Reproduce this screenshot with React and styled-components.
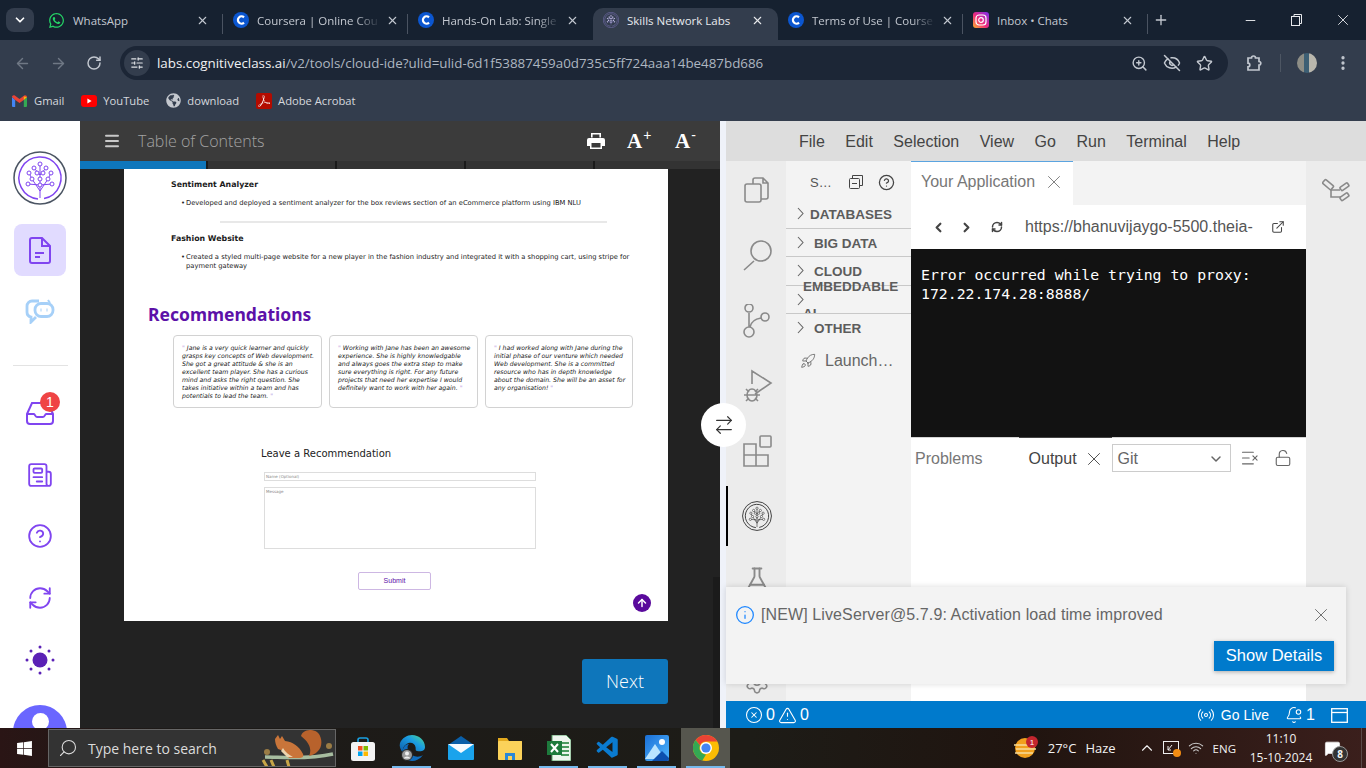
import React from "react";
import styled, { createGlobalStyle } from "styled-components";
import {
  ChevronDown, X, Plus, Minus, ArrowLeft, ArrowRight, RotateCw, ZoomIn, EyeOff, Star,
  EllipsisVertical, SlidersHorizontal, Menu, Newspaper, CircleHelp, RefreshCw,
  ArrowUp, ArrowRightLeft, ChevronRight, ChevronLeft, ExternalLink, Rocket, CircleX, TriangleAlert,
  Info, Radio, BellDot, LockOpen, ListX, Search, ChevronUp, Wifi, MessageSquare, FlaskConical,
  CircleQuestionMark, Settings,
} from "lucide-react";
import { FaWhatsapp, FaGlobeAmericas, FaWindows } from "react-icons/fa";
import { SiAdobeacrobatreader } from "react-icons/si";
import { VscVscode } from "react-icons/vsc";

const GlobalStyle = createGlobalStyle`
  html, body { margin: 0; padding: 0; background: #222; }
  * { box-sizing: border-box; }
  #root { width: 1366px; height: 768px; overflow: hidden; }
`;

const Page = styled.div`
  width: 1366px;
  height: 768px;
  display: flex;
  flex-direction: column;
  font-family: "Open Sans", "Liberation Sans", sans-serif;
  overflow: hidden;
`;

/* ---------- browser chrome ---------- */
const TabStrip = styled.div`
  height: 40px;
  background: #162130;
  display: flex;
  padding: 8px 0 0 6px;
  color: #c9ced6;
  flex: none;
`;
const TabMenu = styled.div`
  width: 28px;
  height: 24px;
  margin-right: 4px;
  border-radius: 8px;
  background: #333d4d;
  display: flex;
  align-items: center;
  justify-content: center;
  color: #fff;
`;
const Tab = styled.div`
  position: relative;
  width: 185px;
  height: 32px;
  padding: 0 14px 8px 10px;
  display: flex;
  align-items: center;
  gap: 8px;
  font-size: 11.5px;
  border-radius: 10px 10px 0 0;
  background: ${(p) => (p.$active ? "#333d4d" : "transparent")};
  color: ${(p) => (p.$active ? "#e8eaed" : "#c3c8d0")};

  & > svg {
    flex: none;
  }

  &::after {
    content: "";
    display: ${(p) => (p.$sep ? "block" : "none")};
    position: absolute;
    right: 0;
    top: 6px;
    height: 20px;
    width: 1px;
    background: #4a5361;
  }
`;
const TabTitle = styled.span`
  flex: 1;
  white-space: nowrap;
  mask-image: ${(p) => (p.$fade ? "linear-gradient(to right, #000 82%, transparent 102%)" : "none")};
`;
const NewTab = styled.div`
  width: 20px;
  height: 24px;
  margin-left: 3px;
  display: flex;
  align-items: center;
  justify-content: center;
  color: #c3c8d0;
`;
const WindowButtons = styled.div`
  margin-left: auto;
  margin-top: -8px;
  display: flex;
  color: #e8eaed;
`;
const WindowButton = styled.div`
  width: 46.3px;
  height: 40px;
  display: flex;
  align-items: center;
  justify-content: center;
`;
const Toolbar = styled.div`
  height: 44px;
  flex: none;
  background: #333d4d;
  display: flex;
  align-items: center;
  padding: 2px 0 0 4px;
  color: #c3c8d0;
`;
const NavButton = styled.div`
  width: 36px;
  display: flex;
  justify-content: center;
  color: ${(p) => (p.$dim ? "#6f7885" : "#c3c8d0")};
`;
const AddressBar = styled.div`
  width: 1108px;
  height: 34px;
  margin-left: 8px;
  padding: 0 15px 0 4px;
  border-radius: 17px;
  background: #1c2636;
  display: flex;
  align-items: center;
`;
const SiteButton = styled.div`
  width: 26px;
  height: 26px;
  border-radius: 50%;
  background: #333d4d;
  display: flex;
  align-items: center;
  justify-content: center;
  margin-right: 7px;
  color: #dfe2e6;
`;
const Url = styled.div`
  flex: 1;
  font-size: 13.37px;
  color: #aeb6c1;
  white-space: nowrap;
`;
const Host = styled.span`
  color: #f0f1f3;
`;
const AddressIcons = styled.div`
  display: flex;
  gap: 15px;
  align-items: center;
  color: #c3c8d0;
`;
const ToolbarEnd = styled.div`
  display: flex;
  align-items: center;
  margin-left: 17px;
`;
const ToolbarSep = styled.div`
  width: 1px;
  height: 18px;
  background: #4d5663;
  margin: 0 16px 0 17px;
`;
const Avatar = styled.div`
  width: 20px;
  height: 20px;
  border-radius: 50%;
  background: linear-gradient(90deg, #8e8e86 0 35%, #3d5f74 35% 60%, #b9b7ad 60%);
  margin-right: 17px;
`;
const Bookmarks = styled.div`
  height: 36px;
  flex: none;
  background: #333d4d;
  display: flex;
  align-items: center;
  padding: 0 0 3px 12px;
  gap: 17px;
  font-size: 11.2px;
  color: #d5d8dd;
`;
const Bookmark = styled.div`
  display: flex;
  align-items: center;
  gap: ${(p) => p.$gap || "6px"};
`;
const AcrobatTile = styled.span`
  width: 16px;
  height: 16px;
  background: #b30b00;
  display: flex;
  align-items: center;
  justify-content: center;
  border-radius: 2px;
`;

/* ---------- workspace ---------- */
const Workspace = styled.div`
  position: relative;
  flex: 1;
  min-height: 0;
  display: grid;
  grid-template-columns: 80px 640px 6px 640px;
  border-top: 1px solid #333d4d;
  overflow: hidden;
`;
const Rail = styled.nav`
  background: #fff;
  display: flex;
  flex-direction: column;
  align-items: center;
  padding-top: 30px;
  color: #8045f0;
  overflow: hidden;
`;
const RailLogo = styled.div`
  height: 54px;
  margin-bottom: 19px;
`;
const RailItem = styled.div`
  position: relative;
  flex: none;
  width: 52px;
  height: 52px;
  margin-bottom: ${(p) => p.$gap || "9.75px"};
  border-radius: 8px;
  background: ${(p) => (p.$active ? "#e1dbff" : "transparent")};
  display: flex;
  align-items: center;
  justify-content: center;
`;
const RailRule = styled.div`
  flex: none;
  width: 55px;
  height: 1px;
  background: #e3e3e3;
  margin: 27px 0 21px;
`;
const Badge = styled.div`
  position: absolute;
  top: 5px;
  right: 6px;
  width: 20px;
  height: 20px;
  border-radius: 50%;
  background: #ef4444;
  color: #fff;
  font: 14px/20px "Liberation Sans", sans-serif;
  text-align: center;
`;
const FlippedNews = styled(Newspaper)`
  transform: scaleX(-1);
`;
const UserBubble = styled.div`
  flex: none;
  width: 54px;
  height: 54px;
  margin-top: 19px;
  border-radius: 50%;
  background: #6a66ff;
  display: flex;
  justify-content: center;
  padding-top: 8px;
`;
const UserHead = styled.div`
  width: 17px;
  height: 17px;
  border-radius: 50%;
  background: #fff;
`;
const Lesson = styled.section`
  position: relative;
  background: #222;
  display: flex;
  flex-direction: column;
  min-height: 0;

  &::after {
    content: "";
    position: absolute;
    right: 0;
    top: 456px;
    bottom: 0;
    width: 7px;
    background: #1b1b1b;
  }
`;
const LessonHeader = styled.header`
  height: 40px;
  flex: none;
  background: #3b3b3b;
  display: flex;
  align-items: center;
  padding-left: 23px;
  color: #fff;
`;
const LessonTitle = styled.div`
  margin-left: 17px;
  font: 300 16px "Open Sans", sans-serif;
  color: #a3a3a3;
  flex: 1;
`;
const HeaderTools = styled.div`
  display: flex;
  align-items: center;
  gap: 22px;
  margin-right: 19px;
`;
const SizeButton = styled.div`
  font: bold 21px "Liberation Serif", serif;
  width: 26px;
  display: flex;
  align-items: flex-start;
`;
const SizeMark = styled.span`
  font: 400 14px "Liberation Sans", sans-serif;
  margin: -2px 0 0 1px;
`;
const Progress = styled.div`
  flex: none;
  height: 8px;
  display: grid;
  grid-template-columns: 126px 127px 127px 127px 1fr;
  gap: 2px;
  background: #1a1a1a;
`;
const ProgressPart = styled.div`
  background: ${(p) => (p.$done ? "#0e76bb" : "#333")};
`;
const LessonBody = styled.div`
  flex: 1;
  display: flex;
  flex-direction: column;
  align-items: flex-end;
  padding-right: 52px;
`;
const Doc = styled.article`
  position: relative;
  width: 544px;
  height: 452px;
  background: #fff;
  color: #222;
  font-family: "DejaVu Sans", sans-serif;
  font-size: 6.75px;
  line-height: 9px;
  padding: 11px 34px 0 47px;
`;
const ProjectName = styled.h4`
  margin: 0;
  font-size: 7.85px;
  line-height: 10px;
  font-weight: 700;
  color: #1b1b1b;
`;
const ProjectList = styled.ul`
  margin: 9px 0 0;
  padding-left: 15px;
  list-style: none;

  li::before {
    content: "•";
    display: inline-block;
    width: 5px;
    margin-left: -5px;
  }
`;
const Rule = styled.hr`
  border: none;
  height: 2px;
  background: #e8e8e8;
  margin: 13px 27px 11px 49px;
`;
const RecoHeading = styled.h2`
  margin: 31px 0 0 -23px;
  font: 700 17.5px/24px "Noto Sans", sans-serif;
  color: #5c11a8;
`;
const Cards = styled.div`
  display: grid;
  grid-template-columns: 149px 149px 148px;
  gap: 7px;
  margin: 9px 0 0 2px;
`;
const Card = styled.div`
  height: 73px;
  border: 1px solid #d2d2d2;
  border-radius: 4px;
  padding: 8px 0 0 8px;
  font-size: 6.2px;
  line-height: 8px;
  font-style: italic;
  white-space: nowrap;
  color: #222;
`;
const Quote = styled.span`
  color: #b79ae0;
`;
const FormTitle = styled.h3`
  margin: 39px 0 0 90px;
  font-size: 10px;
  line-height: 13px;
  font-weight: 400;
  color: #222;
`;
const FormFields = styled.form`
  display: flex;
  flex-direction: column;
  margin: 12px 0 0 93px;
  width: 272px;
`;
const NameField = styled.div`
  height: 9px;
  border: 1px solid #ddd;
  font-size: 4px;
  line-height: 7px;
  padding-left: 1px;
  color: #888;
`;
const MessageField = styled.div`
  height: 62px;
  margin-top: 6px;
  border: 1px solid #ddd;
  font-size: 4px;
  line-height: 7px;
  padding-left: 1px;
  color: #888;
`;
const SubmitButton = styled.div`
  width: 73px;
  height: 18px;
  margin: 23px 0 0 187px;
  border: 1px solid #cdb7e3;
  border-radius: 2px;
  text-align: center;
  font: 7px/16px "Liberation Sans", sans-serif;
  color: #5c11a8;
`;
const BackToTop = styled.div`
  position: absolute;
  right: 17px;
  bottom: 9px;
  width: 18px;
  height: 18px;
  border-radius: 50%;
  background: #5a0a9c;
  color: #fff;
  display: flex;
  align-items: center;
  justify-content: center;
`;
const NextButton = styled.div`
  width: 86px;
  height: 45px;
  margin-top: 38px;
  border-radius: 3px;
  background: #0e76bb;
  color: #fff;
  font: 300 18px/45px "Open Sans", sans-serif;
  text-align: center;
`;
const Divider = styled.div`
  background: #eff2f9;
`;
const SwapButton = styled.div`
  position: absolute;
  left: 701px;
  top: 282px;
  width: 45px;
  height: 44px;
  border-radius: 50%;
  background: #fff;
  display: flex;
  align-items: center;
  justify-content: center;
  color: #333;
  z-index: 3;
`;

/* ---------- IDE ---------- */
const Ide = styled.section`
  position: relative;
  display: flex;
  flex-direction: column;
  min-height: 0;
  font-family: "Liberation Sans", Arial, sans-serif;
`;
const MenuBar = styled.div`
  height: 40px;
  flex: none;
  background: #dddddd;
  display: flex;
  align-items: center;
  padding: 2px 0 0 73px;
  gap: 20.5px;
  font-size: 16px;
  color: #444;
`;
const IdeBody = styled.div`
  flex: 1;
  min-height: 0;
  display: grid;
  grid-template-columns: 60px 125px 395px 60px;
`;
const ActivityBar = styled.div`
  background: #ececec;
  display: flex;
  flex-direction: column;
  color: #8a8a8a;
  overflow: hidden;
`;
const ActivityItem = styled.div`
  position: relative;
  flex: none;
  height: 65px;
  display: flex;
  align-items: center;
  justify-content: center;
  padding-left: 2px;

  &:first-child {
    margin-top: -3px;
  }

  &::before {
    content: "";
    display: ${(p) => (p.$active ? "block" : "none")};
    position: absolute;
    left: 0;
    top: 3px;
    bottom: 2px;
    width: 2px;
    background: #000;
  }
`;
const ActivityEnd = styled(ActivityItem)`
  margin-top: auto;
  height: 38px;
`;
const SideBar = styled.aside`
  background: #f3f3f3;
  color: #666;
`;
const SideHead = styled.div`
  height: 39px;
  display: flex;
  align-items: center;
  padding: 3px 0 0 24px;
  font-size: 13px;
  color: #555;
`;
const SideHeadIcons = styled.div`
  display: flex;
  align-items: center;
  gap: 14px;
  margin-left: 16px;
  color: #444;
`;
const Section = styled.div`
  height: ${(p) => p.$h || "28.4px"};
  display: ${(p) => (p.$wrap ? "block" : "flex")};
  align-items: flex-start;
  padding: 7px 0 0 11px;
  font-size: 13.5px;
  line-height: 15px;
  font-weight: 700;
  color: #5c5c5c;
  border-bottom: ${(p) => (p.$flat ? "none" : "1px solid #c8c8c8")};
  overflow: ${(p) => (p.$clip ? "hidden" : "visible")};
`;
const SectionChevron = styled.svg`
  display: block;
  flex: none;
  width: 7px;
  height: 13px;
  fill: none;
  stroke: #666;
  stroke-width: 1.1;
`;
const SectionLabel = styled.div`
  width: 100px;
  margin-left: ${(p) => p.$ml || "-1px"};
  text-indent: ${(p) => p.$indent || "11px"};
  position: relative;
  z-index: 1;
`;
const LaunchRow = styled.div`
  display: flex;
  align-items: center;
  gap: 9px;
  padding: 4px 0 0 14px;
  font-size: 16px;
  color: #666;
  margin-top: 5px;
`;
const Editor = styled.div`
  display: flex;
  flex-direction: column;
  min-height: 0;
  background: #fff;
`;
const EditorTabs = styled.div`
  height: 44px;
  flex: none;
  background: #f3f3f3;
`;
const EditorTab = styled.div`
  width: 162px;
  height: 44px;
  background: #fff;
  border-top: 1px solid #5ba4e0;
  padding: 0 8px 3px 10px;
  display: flex;
  align-items: center;
  justify-content: space-between;
  font-size: 16px;
  color: #777;
`;
const PreviewBar = styled.div`
  height: 44px;
  flex: none;
  display: flex;
  align-items: center;
  padding-left: 20px;
  color: #444;
`;
const PreviewNav = styled.div`
  display: flex;
  align-items: center;
  gap: 13px;
  width: 94px;

  svg:last-child {
    margin-left: 4px;
  }
`;
const PreviewUrl = styled.div`
  width: 246px;
  font-size: 16px;
  color: #555;
  white-space: nowrap;
`;
const Terminal = styled.pre`
  height: 188px;
  flex: none;
  margin: 0;
  padding: 17px 10px 0;
  background: #121212;
  color: #fff;
  font: 14.8px/18.5px "DejaVu Sans Mono", monospace;
`;
const PanelTabs = styled.div`
  height: 41px;
  flex: none;
  display: flex;
  align-items: center;
  border-top: 1px solid #d5d5d5;
  padding-left: 4px;
  font-size: 16px;
  color: #777;
`;
const ProblemsTab = styled.span`
  padding-top: 2px;
`;
const OutputTab = styled.div`
  width: 93px;
  height: 41px;
  margin: -1px 0 0 36px;
  padding: 2px 0 0 10px;
  border-top: 1px solid #444;
  display: flex;
  align-items: center;
  gap: 6px;
  color: #444;
`;
const GitSelect = styled.div`
  width: 119px;
  height: 28px;
  border: 1px solid #ccc;
  display: flex;
  align-items: center;
  justify-content: space-between;
  padding: 1px 6px 0 5px;
  color: #666;
`;
const PanelIcons = styled.div`
  display: flex;
  align-items: center;
  gap: 14px;
  margin-left: 9px;
  color: #666;
`;
const RightRail = styled.div`
  background: #ececec;
  display: flex;
  justify-content: center;
  padding-top: 15px;
  color: #8a8a8a;
`;
const Notice = styled.div`
  position: absolute;
  left: 0;
  top: 466px;
  width: 620px;
  height: 97px;
  background: #f3f3f3;
  box-shadow: 0 0 6px rgba(0, 0, 0, 0.15);
  padding: 17px 14px 0 9px;
  z-index: 2;
`;
const NoticeLine = styled.div`
  display: flex;
  align-items: center;
  gap: 6px;
  font-size: 16px;
  color: #666;
`;
const NoticeText = styled.span`
  flex: 1;
  letter-spacing: 0.11px;
`;
const NoticeAction = styled.div`
  display: flex;
  justify-content: flex-end;
  margin: 15px -2px 0 0;
`;
const NoticeButton = styled.div`
  width: 120px;
  height: 30px;
  background: #007acc;
  color: #fff;
  font-size: 16.5px;
  line-height: 29px;
  text-align: center;
  box-shadow: 0 1px 4px rgba(0, 0, 0, 0.3);
`;
const StatusBar = styled.footer`
  height: 27px;
  flex: none;
  background: #007acc;
  color: #fff;
  display: flex;
  align-items: center;
  padding: 1px 18px 0 19px;
  font-size: 16px;
`;
const StatusGroup = styled.div`
  display: flex;
  align-items: center;
  gap: ${(p) => p.$gap || "3px"};
  margin-left: ${(p) => p.$ml || "0"};
`;
const GoLive = styled.span`
  font-size: 14px;
`;

/* ---------- taskbar ---------- */
const Taskbar = styled.div`
  height: 40px;
  flex: none;
  display: flex;
  align-items: stretch;
  background: linear-gradient(90deg, #2a1515 0, #1d1a18 12%, #1d1c17 55%, #20140f 75%, #3b1f1c 100%);
  color: #f2f2f2;
`;
const StartButton = styled.div`
  width: 48px;
  display: flex;
  align-items: center;
  justify-content: center;
`;
const SearchBox = styled.div`
  position: relative;
  width: 288px;
  margin: 1px 2px 1px 0;
  background: #333;
  border: 1px solid #666;
  display: flex;
  align-items: center;
  padding-left: 9px;
  gap: 10px;
  font-size: 14px;
  color: #dcdcdc;
  overflow: hidden;
`;
const SearchGlass = styled(Search)`
  transform: scaleX(-1);
`;
const Squirrel = styled.svg`
  position: absolute;
  right: 0;
  top: 0;
`;
const TaskIcon = styled.div`
  position: relative;
  width: 49px;
  display: flex;
  align-items: center;
  justify-content: center;
  background: ${(p) => (p.$active ? "#56564e" : "transparent")};

  &::after {
    content: "";
    display: ${(p) => (p.$open ? "block" : "none")};
    position: absolute;
    left: 5px;
    right: 5px;
    bottom: 0;
    height: 2px;
    background: #76b9ed;
  }
`;
const Tray = styled.div`
  margin-left: auto;
  display: flex;
  align-items: center;
  font-size: 13px;
  border-right: 1px solid #5a4a48;
  padding-right: 20px;
  margin-right: 4px;
`;
const WeatherText = styled.div`
  display: flex;
  gap: 9px;
  margin: 0 22px 0 10px;
  font-size: 13px;
`;
const TrayIcon = styled.div`
  position: relative;
  display: flex;
  margin-right: ${(p) => p.$mr || "10px"};
`;
const TrayDot = styled.div`
  position: absolute;
  right: -2px;
  bottom: -1px;
  width: 8px;
  height: 8px;
  border-radius: 50%;
  background: #f28c13;
`;
const Lang = styled.div`
  font-size: 11.5px;
  margin-right: 10px;
`;
const Clock = styled.div`
  width: 70px;
  text-align: center;
  font-size: 12px;
  line-height: 19px;
  white-space: nowrap;
  margin-right: 8px;
`;
const NotifyCount = styled.div`
  position: absolute;
  right: -7px;
  bottom: -5px;
  width: 16px;
  height: 16px;
  border-radius: 50%;
  background: #333;
  border: 1px solid #999;
  font-size: 10px;
  line-height: 14px;
  text-align: center;
  font-weight: 700;
`;

/* ---------- drawn logos ---------- */
function CourseraMark() {
  return (
    <svg width="16" height="16" viewBox="0 0 16 16">
      <circle cx="8" cy="8" r="8" fill="#0b56d0" />
      <path d="M11 5.4a3.6 3.6 0 1 0 0 5.2" fill="none" stroke="#fff" strokeWidth="2.2" />
    </svg>
  );
}

function InstagramMark() {
  return (
    <svg width="16" height="16" viewBox="0 0 16 16">
      <defs>
        <linearGradient id="ig" x1="0" y1="1" x2="1" y2="0">
          <stop offset="0" stopColor="#fdb32b" />
          <stop offset="0.45" stopColor="#ee2a7b" />
          <stop offset="1" stopColor="#7a2ff0" />
        </linearGradient>
      </defs>
      <rect width="16" height="16" rx="3" fill="url(#ig)" />
      <rect x="3" y="3" width="10" height="10" rx="3" fill="none" stroke="#fff" strokeWidth="1.2" />
      <circle cx="8" cy="8" r="2.3" fill="none" stroke="#fff" strokeWidth="1.2" />
    </svg>
  );
}

function TreeLogo({ size = 54, ring = "#8045f0", outer = "#4b5563" }) {
  const nodes = [[27, 13], [21, 17], [33, 17], [16, 22], [38, 22], [24, 22], [30, 22], [19, 28], [35, 28], [27, 28], [27, 34], [15, 33], [39, 33]];
  return (
    <svg width={size} height={size} viewBox="0 0 54 54">
      <circle cx="27" cy="27" r="26" fill="none" stroke={outer} strokeWidth="1.5" />
      <path d="M25 47.9A21 21 0 1 1 31 47.6" fill="none" stroke={ring} strokeWidth="1.5" />
      <path d="M27 13V47M27 40L19 28L16 22M27 40L35 28L38 22M27 34L15 33M27 34L39 33M27 24L21 17M27 24L33 17" fill="none" stroke={ring} strokeWidth="1" />
      {nodes.map(([x, y]) => (
        <circle key={x + "-" + y} cx={x} cy={y} r="2" fill="#fff" stroke={ring} strokeWidth="1" />
      ))}
    </svg>
  );
}

function GmailMark() {
  return (
    <svg width="15" height="12" viewBox="0 0 15 12">
      <path d="M0 2V11a1 1 0 0 0 1 1H3.2V5L0 2Z" fill="#4285f4" />
      <path d="M15 2V11a1 1 0 0 1-1 1H11.8V5L15 2Z" fill="#34a853" />
      <path d="M0 2C0 .5 1.6-.4 2.8.5L7.5 4 12.2.5C13.4-.4 15 .5 15 2L11.8 5 7.5 8 3.2 5 0 2Z" fill="#ea4335" />
      <path d="M11.8 1.5 15 2l-3.2 3Z" fill="#fbbc04" />
    </svg>
  );
}

function YoutubeMark() {
  return (
    <svg width="16" height="12" viewBox="0 0 16 12">
      <rect width="16" height="12" rx="3" fill="#f00" />
      <path d="M6.4 3.4v5.2L10.6 6Z" fill="#fff" />
    </svg>
  );
}

function ExtensionIcon() {
  return (
    <svg width="18" height="18" viewBox="0 0 18 18" fill="none" stroke="currentColor" strokeWidth="1.7">
      <path d="M3 4h3.500a2 2 0 0 1 4 0H14v3.500a1.800 1.800 0 0 1 0 3.600V16H3v-3.200a1.800 1.800 0 0 0 0-3.600Z" />
    </svg>
  );
}

function PrintIcon() {
  return (
    <svg width="18" height="16" viewBox="0 0 18 16" fill="#fff">
      <path d="M4 0h10v4.500h-1.600V1.600H5.600v2.900H4Z" />
      <path d="M2 5h14a2 2 0 0 1 2 2v6h-3v3H3v-3H0V7a2 2 0 0 1 2-2Z" />
      <rect x="4.500" y="10" width="9" height="4.500" fill="#3b3b3b" />
    </svg>
  );
}

function DocIcon() {
  return (
    <svg width="22" height="27" viewBox="0 0 22 27" fill="none" stroke="currentColor" strokeWidth="2">
      <path d="M3 1h10l8 8v15a2 2 0 0 1-2 2H3a2 2 0 0 1-2-2V3a2 2 0 0 1 2-2Z" />
      <path d="M13 1v8h8M6 16h9M6 20h5" />
    </svg>
  );
}

function ChatBotIcon() {
  return (
    <svg width="30" height="25" viewBox="0 0 30 25" fill="none" stroke="#a6d0f8" strokeWidth="2.800">
      <path d="M14 2H7a5 5 0 0 0-5 5v6a5 5 0 0 0 4 5v5l5-5" />
      <rect x="10" y="4.500" width="18" height="13" rx="6" fill="#fff" />
      <path d="M15.500 11h1M21.500 11h1" />
      <path d="M23 1l2 3" strokeWidth="2" />
    </svg>
  );
}

function StoreIcon() {
  return (
    <svg width="24" height="25" viewBox="0 0 24 25">
      <path d="M7 7V4a2 2 0 0 1 2-2h6a2 2 0 0 1 2 2v3" fill="none" stroke="#1aa1e2" strokeWidth="1.6" />
      <rect y="6" width="24" height="19" rx="2.5" fill="#f3f3f3" />
      <rect x="7" y="10" width="4.5" height="4.5" fill="#f25022" />
      <rect x="12.5" y="10" width="4.5" height="4.5" fill="#7fba00" />
      <rect x="7" y="15.5" width="4.5" height="4.5" fill="#00a4ef" />
      <rect x="12.5" y="15.5" width="4.5" height="4.5" fill="#ffb900" />
    </svg>
  );
}

function EdgeIcon() {
  return (
    <svg width="26" height="26" viewBox="0 0 26 26">
      <defs>
        <linearGradient id="edge" x1="0" y1="1" x2="1" y2="0">
          <stop offset="0" stopColor="#0c59a4" />
          <stop offset="0.6" stopColor="#1b9de2" />
          <stop offset="1" stopColor="#4fdc8a" />
        </linearGradient>
      </defs>
      <path d="M13 0C20 0 26 5 26 12c0 4-4 5-8 4-2-.5-1-2-1.500-4C16 9 13 7 9.500 8 5 9.500 3 14 4 18 1.500 15 0 11 1 8 3 3 8 0 13 0Z" fill="url(#edge)" />
      <path d="M4 18C3 13 6 9 10 9c-3 3-1 8 3 11 4 2.500 8 2 11 0-3 4-7 6-11 6-4 0-8-3-9-8Z" fill="#0f6cbd" />
      <circle cx="8" cy="20" r="5.500" fill="#9a9a9a" stroke="#222" />
      <circle cx="8" cy="18.500" r="2" fill="#eee" />
      <path d="M4.500 23.500a4 4 0 0 1 7 0Z" fill="#eee" />
    </svg>
  );
}

function MailIcon() {
  return (
    <svg width="26" height="24" viewBox="0 0 26 24">
      <path d="M13 0 26 9H0Z" fill="#0a5fa8" />
      <rect y="8" width="26" height="16" rx="1" fill="#1aa3ec" />
      <path d="M0 8h26L13 17Z" fill="#f5fbff" />
    </svg>
  );
}

function FolderIcon() {
  return (
    <svg width="24" height="24" viewBox="0 0 24 24">
      <path d="M0 2h9l2 3h13v4H0Z" fill="#e3a91e" />
      <rect y="5" width="24" height="19" rx="1" fill="#fbd25a" />
      <path d="M7 24v-7h10v7h-3v-4h-4v4Z" fill="#2b88d8" />
    </svg>
  );
}

function ExcelIcon() {
  return (
    <svg width="24" height="26" viewBox="0 0 24 26">
      <path d="M5 0h14l5 5v21H5Z" fill="#eef5ee" stroke="#5aa36a" />
      <path d="M14 8h8M14 12h8M14 16h8M14 20h8" stroke="#4c9a5f" strokeWidth="2" />
      <rect y="6" width="15" height="14" fill="#1d7a3c" />
      <path d="M4 9l7 8M11 9l-7 8" stroke="#fff" strokeWidth="2" />
    </svg>
  );
}

function PhotosIcon() {
  return (
    <svg width="24" height="26" viewBox="0 0 24 26">
      <defs>
        <linearGradient id="ph" x1="0" y1="0" x2="1" y2="1">
          <stop offset="0" stopColor="#1a6fd6" />
          <stop offset="1" stopColor="#52b8ff" />
        </linearGradient>
      </defs>
      <rect width="24" height="26" rx="2" fill="url(#ph)" />
      <circle cx="17" cy="7" r="3" fill="#fff" />
      <path d="M0 24 10 9l10 15Z" fill="#b9e4ff" />
      <path d="M7 26l10-10 7 7v1a2 2 0 0 1-2 2Z" fill="#0c4fae" />
    </svg>
  );
}

function ChromeIcon() {
  return (
    <svg width="26" height="26" viewBox="0 0 26 26">
      <circle cx="13" cy="13" r="13" fill="#fbbc04" />
      <path d="M13 0a13 13 0 0 1 11.300 6.500H13a6.500 6.500 0 0 0-6 4L2.600 5.100A13 13 0 0 1 13 0Z" fill="#ea4335" />
      <path d="M2.600 5.100 7 10.500a6.500 6.500 0 0 0 6 9L9.400 25.500A13 13 0 0 1 2.600 5.100Z" fill="#34a853" />
      <circle cx="13" cy="13" r="6" fill="#fff" />
      <circle cx="13" cy="13" r="4.600" fill="#4285f4" />
    </svg>
  );
}

function WeatherIcon() {
  return (
    <svg width="24" height="24" viewBox="0 0 24 24">
      <circle cx="11" cy="12" r="10" fill="#f2a01e" />
      <path d="M0 9h18M2 13h20M1 17h18" stroke="#f7dc9b" strokeWidth="1.500" />
      <circle cx="18" cy="6" r="6" fill="#c4262e" />
      <text x="18" y="9" fontSize="8" fill="#fff" textAnchor="middle" fontFamily="Liberation Sans">1</text>
    </svg>
  );
}

function Chevron() {
  return (
    <SectionChevron viewBox="0 0 7 13">
      <path d="M1 1l5 5.500-5 5.500" />
    </SectionChevron>
  );
}

const activity = {
  files: "M12 10V6a2 2 0 0 1 2-2h8l5 5v14a2 2 0 0 1-2 2h-5M22 4v5h5M6 10h12a2 2 0 0 1 2 2v14a2 2 0 0 1-2 2H6a2 2 0 0 1-2-2V12a2 2 0 0 1 2-2Z",
  search: "M13 22L3 31M20 22a10 10 0 1 0 0-20 10 10 0 0 0 0 20Z",
  scm: "M8 9v14M13 28a5 5 0 1 1-10 0 5 5 0 0 1 10 0ZM12 4a4 4 0 1 1-8 0 4 4 0 0 1 8 0ZM28 13a4 4 0 1 1-8 0 4 4 0 0 1 8 0ZM20 14c-6 1-10 4-11 9",
  debug: "M11 15V2L30 14 14 25M3 26h16M5 20l3 3M17 20l-3 3M5 32l3-3M17 32l-3-3M11 20a5 6 0 0 0-5 6 5 6 0 0 0 10 0 5 6 0 0 0-5-6Z",
  ext: "M3 10h12v11H3ZM3 21h12v11H3ZM15 21h12v11H15ZM20 2h9a1 1 0 0 1 1 1v9a1 1 0 0 1-1 1h-9a1 1 0 0 1-1-1V3a1 1 0 0 1 1-1Z",
};

function ActivityGlyph({ d }) {
  return (
    <svg width="32" height="34" viewBox="0 0 32 34" fill="none" stroke="currentColor" strokeWidth="1.600">
      <path d={d} />
    </svg>
  );
}

export default function App() {
  const tabs = [
    { title: "WhatsApp", icon: <FaWhatsapp size={17} color="#25d366" />, sep: true },
    { title: "Coursera | Online Cou", icon: <CourseraMark />, sep: true, fade: true },
    { title: "Hands-On Lab: Single", icon: <CourseraMark />, fade: true },
    { title: "Skills Network Labs", icon: <TreeLogo size={16} ring="#8b7fd0" outer="#8b7fd0" />, active: true },
    { title: "Terms of Use | Course", icon: <CourseraMark />, sep: true, fade: true },
    { title: "Inbox • Chats", icon: <InstagramMark />, sep: true },
  ];

  return (
    <Page>
      <GlobalStyle />
      <TabStrip>
        <TabMenu><ChevronDown size={14} strokeWidth={3} /></TabMenu>
        {tabs.map((t) => (
          <Tab key={t.title} $active={t.active} $sep={t.sep}>
            {t.icon}
            <TabTitle $fade={t.fade}>{t.title}</TabTitle>
            <X size={13} strokeWidth={2} />
          </Tab>
        ))}
        <NewTab><Plus size={16} strokeWidth={2} /></NewTab>
        <WindowButtons>
          <WindowButton><Minus size={15} strokeWidth={1.5} /></WindowButton>
          <WindowButton>
            <svg width="11" height="12" viewBox="0 0 11 12" fill="none" stroke="currentColor">
              <rect x="0.5" y="2.500" width="8" height="9" /><path d="M3 2.500V.5h7.500v9H8.500" />
            </svg>
          </WindowButton>
          <WindowButton><X size={18} strokeWidth={1.2} /></WindowButton>
        </WindowButtons>
      </TabStrip>

      <Toolbar>
        <NavButton $dim><ArrowLeft size={17} /></NavButton>
        <NavButton $dim><ArrowRight size={17} /></NavButton>
        <NavButton><RotateCw size={16} strokeWidth={2.2} /></NavButton>
        <AddressBar>
          <SiteButton><SlidersHorizontal size={14} /></SiteButton>
          <Url><Host>labs.cognitiveclass.ai</Host>/v2/tools/cloud-ide?ulid=ulid-6d1f53887459a0d735c5ff724aaa14be487bd686</Url>
          <AddressIcons>
            <ZoomIn size={17} />
            <EyeOff size={18} />
            <Star size={17} />
          </AddressIcons>
        </AddressBar>
        <ToolbarEnd>
          <ExtensionIcon />
          <ToolbarSep />
          <Avatar />
          <EllipsisVertical size={18} strokeWidth={2.4} />
        </ToolbarEnd>
      </Toolbar>

      <Bookmarks>
        <Bookmark $gap="7px"><GmailMark />Gmail</Bookmark>
        <Bookmark><YoutubeMark />YouTube</Bookmark>
        <Bookmark><FaGlobeAmericas size={15} color="#c4c8ce" />download</Bookmark>
        <Bookmark><AcrobatTile><SiAdobeacrobatreader size={12} color="#fff" /></AcrobatTile>Adobe Acrobat</Bookmark>
      </Bookmarks>

      <Workspace>
        <Rail>
          <RailLogo><TreeLogo /></RailLogo>
          <RailItem $active><DocIcon /></RailItem>
          <RailItem $gap="0"><ChatBotIcon /></RailItem>
          <RailRule />
          <RailItem>
            <svg width="28" height="24" viewBox="0 0 28 24" fill="none" stroke="currentColor" strokeWidth="2">
              <path d="M1 13 6 2h16l5 11v7a3 3 0 0 1-3 3H4a3 3 0 0 1-3-3Z" />
              <path d="M1 13h7c1 0 1 3 3 3h6c2 0 2-3 3-3h7" />
            </svg>
            <Badge>1</Badge>
          </RailItem>
          <RailItem><FlippedNews size={26} strokeWidth={1.7} /></RailItem>
          <RailItem><CircleQuestionMark size={26} strokeWidth={1.7} /></RailItem>
          <RailItem><RefreshCw size={26} strokeWidth={1.7} /></RailItem>
          <RailItem $gap="0">
            <svg width="30" height="30" viewBox="0 0 30 30" fill="#5b21b6">
              <circle cx="15" cy="15" r="7.500" />
              <circle cx="15" cy="2" r="1.500" /><circle cx="15" cy="28" r="1.500" />
              <circle cx="2" cy="15" r="1.500" /><circle cx="28" cy="15" r="1.500" />
              <circle cx="6" cy="6" r="1.500" /><circle cx="24" cy="6" r="1.500" />
              <circle cx="6" cy="24" r="1.500" /><circle cx="24" cy="24" r="1.500" />
            </svg>
          </RailItem>
          <UserBubble><UserHead /></UserBubble>
        </Rail>

        <Lesson>
          <LessonHeader>
            <Menu size={18} strokeWidth={2.6} color="#c8c8c8" />
            <LessonTitle>Table of Contents</LessonTitle>
            <HeaderTools>
              <PrintIcon />
              <SizeButton>A<SizeMark>+</SizeMark></SizeButton>
              <SizeButton>A<SizeMark>-</SizeMark></SizeButton>
            </HeaderTools>
          </LessonHeader>
          <Progress>
            <ProgressPart $done />
            <ProgressPart />
            <ProgressPart />
            <ProgressPart />
            <ProgressPart />
          </Progress>
          <LessonBody>
            <Doc>
              <ProjectName>Sentiment Analyzer</ProjectName>
              <ProjectList>
                <li>Developed and deployed a sentiment analyzer for the box reviews section of an eCommerce platform using IBM NLU</li>
              </ProjectList>
              <Rule />
              <ProjectName>Fashion Website</ProjectName>
              <ProjectList>
                <li>Created a styled multi-page website for a new player in the fashion industry and integrated it with a shopping cart, using stripe for payment gateway</li>
              </ProjectList>
              <RecoHeading>Recommendations</RecoHeading>
              <Cards>
                <Card>
                  <Quote>"</Quote> Jane is a very quick learner and quickly<br />grasps key concepts of Web development.<br />She got a great attitude &amp; she is an<br />excellent team player. She has a curious<br />mind and asks the right question. She<br />takes initiative within a team and has<br />potentials to lead the team. <Quote>"</Quote>
                </Card>
                <Card>
                  <Quote>"</Quote> Working with Jane has been an awesome<br />experience. She is highly knowledgable<br />and always goes the extra step to make<br />sure everything is right. For any future<br />projects that need her expertise I would<br />definitely want to work with her again. <Quote>"</Quote>
                </Card>
                <Card>
                  <Quote>"</Quote> I had worked along with Jane during the<br />initial phase of our venture which needed<br />Web development. She is a committed<br />resource who has in depth knowledge<br />about the domain. She will be an asset for<br />any organisation! <Quote>"</Quote>
                </Card>
              </Cards>
              <FormTitle>Leave a Recommendation</FormTitle>
              <FormFields>
                <NameField>Name (Optional)</NameField>
                <MessageField>Message</MessageField>
              </FormFields>
              <SubmitButton>Submit</SubmitButton>
              <BackToTop><ArrowUp size={12} strokeWidth={3} /></BackToTop>
            </Doc>
            <NextButton>Next</NextButton>
          </LessonBody>
        </Lesson>
        <Divider />

        <Ide>
          <MenuBar>
            <span>File</span><span>Edit</span><span>Selection</span><span>View</span>
            <span>Go</span><span>Run</span><span>Terminal</span><span>Help</span>
          </MenuBar>
          <IdeBody>
            <ActivityBar>
              <ActivityItem><ActivityGlyph d={activity.files} /></ActivityItem>
              <ActivityItem><ActivityGlyph d={activity.search} /></ActivityItem>
              <ActivityItem><ActivityGlyph d={activity.scm} /></ActivityItem>
              <ActivityItem><ActivityGlyph d={activity.debug} /></ActivityItem>
              <ActivityItem><ActivityGlyph d={activity.ext} /></ActivityItem>
              <ActivityItem $active><TreeLogo size={30} ring="#222" outer="#222" /></ActivityItem>
              <ActivityItem><FlaskConical size={30} strokeWidth={1.500} /></ActivityItem>
              <ActivityEnd><Settings size={26} strokeWidth={1.500} /></ActivityEnd>
            </ActivityBar>

            <SideBar>
              <SideHead>
                S…
                <SideHeadIcons>
                  <svg width="16" height="16" viewBox="0 0 16 16" fill="none" stroke="currentColor">
                    <rect x="1.500" y="4.500" width="10" height="10" rx="1" />
                    <path d="M4.500 4.500v-3h10v10h-3M4 9.500h5" />
                  </svg>
                  <CircleHelp size={17} strokeWidth={1.800} />
                </SideHeadIcons>
              </SideHead>
              <Section $h="29px">
                <Chevron />
                <SectionLabel $indent="7px">DATABASES</SectionLabel>
              </Section>
              <Section>
                <Chevron />
                <SectionLabel>BIG DATA</SectionLabel>
              </Section>
              <Section $h="29px">
                <Chevron />
                <SectionLabel>CLOUD EMBEDDABLE</SectionLabel>
              </Section>
              <Section $clip $wrap $h="28px">
                <Chevron />
                <SectionLabel $ml="6px" $indent="0">AI</SectionLabel>
              </Section>
              <Section $flat>
                <Chevron />
                <SectionLabel>OTHER</SectionLabel>
              </Section>
              <LaunchRow><Rocket size={16} strokeWidth={1.300} />Launch…</LaunchRow>
            </SideBar>

            <Editor>
              <EditorTabs>
                <EditorTab>Your Application <X size={22} strokeWidth={1} /></EditorTab>
              </EditorTabs>
              <PreviewBar>
                <PreviewNav>
                  <ChevronLeft size={15} strokeWidth={3.500} />
                  <ChevronRight size={15} strokeWidth={3.500} />
                  <RefreshCw size={12} strokeWidth={3} />
                </PreviewNav>
                <PreviewUrl>https://bhanuvijaygo-5500.theia-</PreviewUrl>
                <ExternalLink size={14} strokeWidth={1.800} />
              </PreviewBar>
              <Terminal>{"Error occurred while trying to proxy:\n172.22.174.28:8888/"}</Terminal>
              <PanelTabs>
                <ProblemsTab>Problems</ProblemsTab>
                <OutputTab>Output <X size={22} strokeWidth={1} /></OutputTab>
                <GitSelect>Git <ChevronDown size={16} strokeWidth={2.200} /></GitSelect>
                <PanelIcons>
                  <ListX size={20} strokeWidth={1.300} />
                  <LockOpen size={18} strokeWidth={1.500} />
                </PanelIcons>
              </PanelTabs>
            </Editor>

            <RightRail>
              <svg width="28" height="28" viewBox="0 0 28 28" fill="none" stroke="currentColor" strokeWidth="1.600">
                <rect x="1" y="6" width="11" height="5" rx="1" transform="rotate(40 6 8)" />
                <rect x="18" y="9" width="9" height="4" rx="1" transform="rotate(-35 22 11)" />
                <rect x="18" y="19" width="9" height="4" rx="1" transform="rotate(-35 22 21)" />
                <path d="M9 13v8h10M9 14h9" />
              </svg>
            </RightRail>
          </IdeBody>
          <StatusBar>
            <StatusGroup>
              <CircleX size={18} strokeWidth={1.400} />0
              <TriangleAlert size={19} strokeWidth={1.400} />0
            </StatusGroup>
            <StatusGroup $ml="auto" $gap="6px">
              <Radio size={18} strokeWidth={1.400} /><GoLive>Go Live</GoLive>
            </StatusGroup>
            <StatusGroup $ml="16px">
              <BellDot size={18} strokeWidth={1.400} />1
            </StatusGroup>
            <StatusGroup $ml="16px">
              <svg width="17" height="15" viewBox="0 0 17 15" fill="none" stroke="#fff" strokeWidth="1.300">
                <rect x="0.700" y="0.700" width="15.600" height="13.600" /><path d="M.7 4.500h15.600" />
              </svg>
            </StatusGroup>
          </StatusBar>
          <Notice>
            <NoticeLine>
              <Info size={20} color="#1a85ff" strokeWidth={1.500} />
              <NoticeText>[NEW] LiveServer@5.7.9: Activation load time improved</NoticeText>
              <X size={22} strokeWidth={1} />
            </NoticeLine>
            <NoticeAction><NoticeButton>Show Details</NoticeButton></NoticeAction>
          </Notice>
        </Ide>
        <SwapButton><ArrowRightLeft size={22} strokeWidth={1.300} /></SwapButton>
      </Workspace>

      <Taskbar>
        <StartButton><FaWindows size={17} color="#fff" /></StartButton>
        <SearchBox>
          <SearchGlass size={20} strokeWidth={1.300} />
          Type here to search
          <Squirrel width="78" height="38" viewBox="0 0 78 38">
            <path d="M8 27C24 27 50 30 76 24" stroke="#a7bda0" strokeWidth="3.500" fill="none" />
            <path d="M44 6C46-2 62-3 64 9c2 9-4 15-12 17 3-6 1-13-8-20Z" fill="#b8622c" />
            <path d="M18 9l3-4 2 4 2-3 3 5c8 1 14 5 18 13 1 3-1 4-4 4H32l-5-7-6-2c-2-3-3-7-3-10Z" fill="#c9753a" />
            <path d="M26 18c2 4 6 7 10 9h-6l-6-6Z" fill="#ecd3ad" />
            <path d="M6 30l4 7M14 30l3 7M30 30l2 7" stroke="#c8a648" strokeWidth="3" />
            <circle cx="10" cy="22" r="3" fill="#9a7c45" />
            <circle cx="72" cy="16" r="3" fill="#9a7c45" />
          </Squirrel>
        </SearchBox>
        <TaskIcon><StoreIcon /></TaskIcon>
        <TaskIcon $open><EdgeIcon /></TaskIcon>
        <TaskIcon><MailIcon /></TaskIcon>
        <TaskIcon><FolderIcon /></TaskIcon>
        <TaskIcon $open><ExcelIcon /></TaskIcon>
        <TaskIcon $open><VscVscode size={26} color="#0a7bd0" /></TaskIcon>
        <TaskIcon $open><PhotosIcon /></TaskIcon>
        <TaskIcon $active $open><ChromeIcon /></TaskIcon>
        <Tray>
          <WeatherIcon />
          <WeatherText><span>27°C</span><span>Haze</span></WeatherText>
          <TrayIcon $mr="7px"><ChevronUp size={18} strokeWidth={1.500} /></TrayIcon>
          <TrayIcon $mr="9px">
            <svg width="16" height="15" viewBox="0 0 16 15" fill="none" stroke="#eee">
              <rect x="0.500" y="0.500" width="15" height="12" /><path d="M5 9l4-5M5 5v4h3" />
            </svg>
            <TrayDot />
          </TrayIcon>
          <TrayIcon $mr="9px"><Wifi size={16} strokeWidth={1.600} color="#ccc" /></TrayIcon>
          <Lang>ENG</Lang>
          <Clock>11:10<br />15-10-2024</Clock>
          <TrayIcon $mr="0">
            <MessageSquare size={17} fill="#fff" strokeWidth={1} />
            <NotifyCount>8</NotifyCount>
          </TrayIcon>
        </Tray>
      </Taskbar>
    </Page>
  );
}
